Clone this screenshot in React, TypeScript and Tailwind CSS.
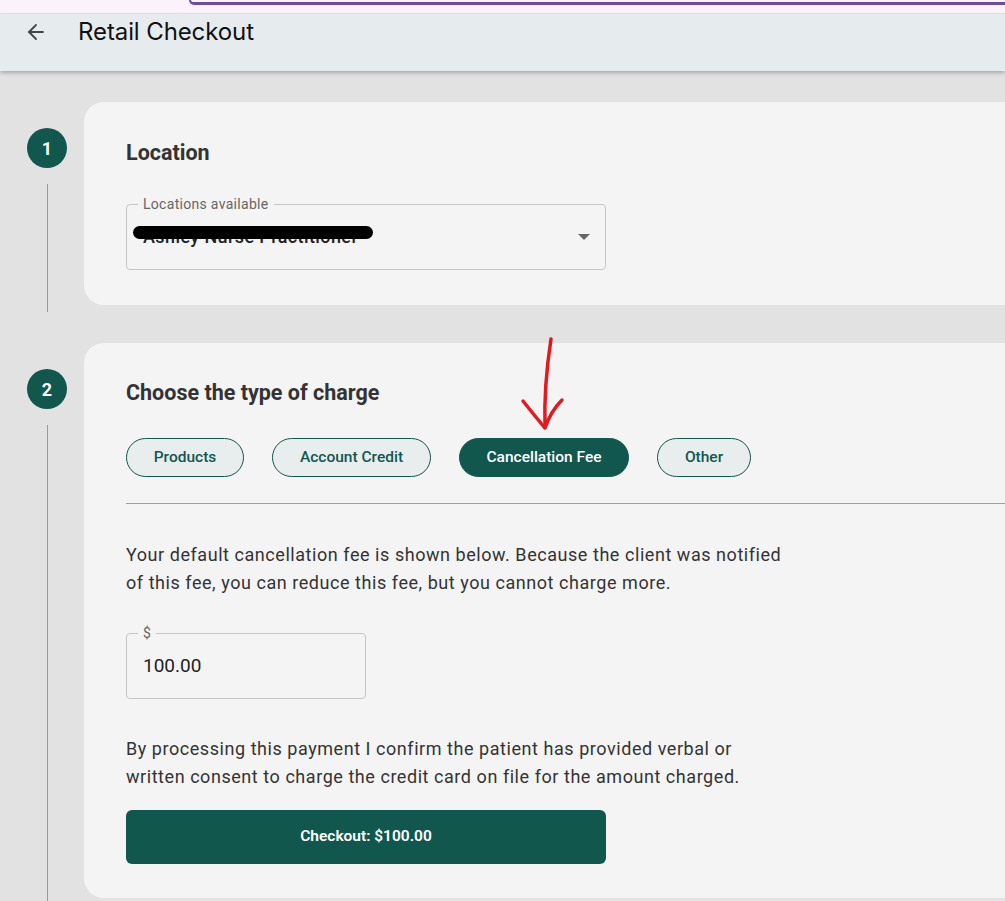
import React from 'react';
import { ArrowLeft } from 'lucide-react';

const charges = [
  { label: 'Products', w: 'w-[118px]' },
  { label: 'Account Credit', w: 'w-[159px]' },
  { label: 'Cancellation Fee', w: 'w-[170px]' },
  { label: 'Other', w: 'w-[94px]' },
];

function StepMarker({ n }: { n: number }) {
  return (
    <div className="ml-[27px] mr-[17px] flex w-10 shrink-0 flex-col items-center pt-[26px] mb-[-7px]">
      <div className="flex h-10 w-10 items-center justify-center rounded-full bg-[#12574e] text-[18px] font-bold text-white">
        {n}
      </div>
      <div className="mt-4 w-px flex-1 bg-[#9a9a9a]" />
    </div>
  );
}

export default function App() {
  const selected = 'Cancellation Fee';

  return (
    <div className="min-h-[901px] overflow-hidden bg-[#e2e2e2] font-['Roboto',sans-serif] text-[#333]">
      {/* browser strip */}
      <div className="h-[14px] border-b border-[#eddbee] bg-[#fcf2fc]">
        <div className="ml-[189px] h-[5px] rounded-bl-[10px] border-b-[3px] border-l-[2px] border-[#6b4f9b]" />
      </div>

      {/* header */}
      <header className="relative z-10 h-[57px] bg-[#e6eced] shadow-[0_2px_4px_rgba(0,0,0,0.25)]">
        <div className="flex h-9 items-center">
          <button className="ml-[24px] flex h-6 w-6 items-center justify-center text-[#444]">
            <ArrowLeft size={24} strokeWidth={1.8} />
          </button>
          <h1 className="ml-[30px] font-['Inter',sans-serif] text-[24px] font-normal tracking-[-0.1px] text-[#111]">
            Retail Checkout
          </h1>
        </div>
      </header>

      <main className="flex flex-col gap-[38px] pt-[31px]">
        {/* step 1 */}
        <div className="flex">
          <StepMarker n={1} />
          <section className="mr-[-40px] flex-1 rounded-[20px] bg-[#f4f4f4] pb-[35px] pl-[42px] pt-[37px]">
            <h2 className="text-[21.5px] font-bold leading-7 text-[#333]">Location</h2>
            <div className="relative mt-[37px] flex h-[66px] w-[480px] items-center rounded-[4px] border border-[#c6c6c6] pl-[16px] pr-[16px]">
              <span className="absolute left-[11px] top-[-11px] bg-[#f4f4f4] px-[5px] text-[14px] leading-[20px] tracking-[0.3px] text-[#666]">
                Locations available
              </span>
              <div className="relative flex-1">
                <span className="text-[18px] font-medium leading-6 tracking-[0.4px] text-[#222]">Ashley Nurse Practitioner</span>
                <div className="absolute left-[-10px] top-[1px] h-[13px] w-[240px] rounded-full bg-black" />
              </div>
              <svg width="12" height="7" viewBox="0 0 12 7" className="mr-[-1px]">
                <path d="M0 0h12L6 6z" fill="#666" />
              </svg>
            </div>
          </section>
        </div>

        {/* step 2 */}
        <div className="flex">
          <StepMarker n={2} />
          <section className="relative mr-[-40px] flex-1 rounded-[20px] bg-[#f4f4f4] pb-[34px] pl-[42px] pt-[36px]">
            <svg
              className="absolute left-[431px] top-[-8px]"
              width="56"
              height="100"
              viewBox="0 0 56 100"
              fill="none"
              stroke="#e3191d"
              strokeWidth="3.5"
              strokeLinecap="round"
              strokeLinejoin="round"
            >
              <path d="M36 4 C32 30 29 60 30 92" />
              <path d="M8 66 C16 76 24 86 30 93 C33 84 38 74 47 65" />
            </svg>

            <h2 className="text-[21.5px] font-bold leading-7 text-[#333]">Choose the type of charge</h2>

            <div className="mt-[31px] flex gap-[28px]">
              {charges.map((c) => (
                <button
                  key={c.label}
                  className={`${c.w} h-[39px] rounded-full border border-[#12574e] text-[15.5px] font-medium ${
                    c.label === selected ? 'bg-[#12574e] text-white' : 'bg-[#e8eeee] text-[#12574e]'
                  }`}
                >
                  {c.label}
                </button>
              ))}
            </div>

            <div className="mt-[26px] h-px bg-[#a0a0a0]" />

            <p className="mt-[37px] whitespace-nowrap text-[18px] leading-7 tracking-[0.55px] text-[#333]">
              Your default cancellation fee is shown below. Because the client was notified
              <br />
              of this fee, you can reduce this fee, but you cannot charge more.
            </p>

            <div className="relative mt-[36px] flex h-[66px] w-[240px] items-center rounded-[4px] border border-[#c6c6c6] pl-[16px]">
              <span className="absolute left-[11px] top-[-11px] bg-[#f4f4f4] px-[5px] text-[14px] leading-[20px] text-[#666]">
                $
              </span>
              <span className="text-[19px] text-[#222]">100.00</span>
            </div>

            <p className="mt-[36px] whitespace-nowrap text-[18px] leading-7 tracking-[0.55px] text-[#333]">
              By processing this payment I confirm the patient has provided verbal or
              <br />
              written consent to charge the credit card on file for the amount charged.
            </p>

            <button className="mt-[19px] flex h-[54px] w-[480px] items-center justify-center rounded-[6px] bg-[#12574e] text-[15.5px] font-semibold text-white">
              Checkout: $100.00
            </button>
          </section>
        </div>
      </main>
    </div>
  );
}
